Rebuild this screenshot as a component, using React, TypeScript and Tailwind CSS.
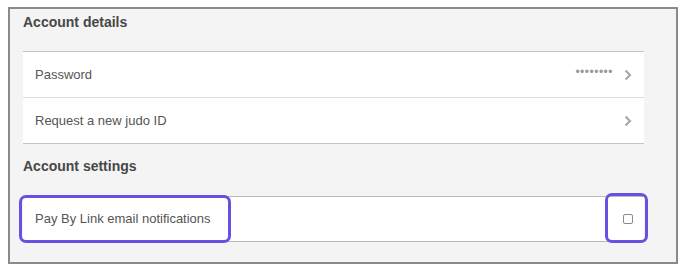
const font = { fontFamily: '"Liberation Sans", Arial, sans-serif' };

function Chevron() {
  return (
    <svg width="8" height="12" viewBox="0 0 8 12" className="shrink-0">
      <path d="M1.5 1.5 L6 6 L1.5 10.5" fill="none" stroke="#a9a9a9" strokeWidth="2.2" />
    </svg>
  );
}

export default function App() {
  return (
    <div className="w-[684px] h-[268px] bg-white pt-[7px] pl-[8px]" style={font}>
      <div className="w-[670px] h-[257px] border-2 border-[#8a8a8a] bg-[#f4f4f4] pl-[13px] pr-[32px] pt-[1px]">
        <h2 className="h-[24px] leading-[24px] text-[14px] font-bold text-[#474747]">
          Account details
        </h2>

        <div className="mt-[17px] bg-white border-t border-b border-[#c4c4c4]">
          <div className="h-[45px] flex items-center pl-[12px] pr-[12px] text-[13px] text-[#555]">
            <span className="flex-1">Password</span>
            <span className="text-[12px] text-[#999] tracking-[0.5px] -translate-y-[3px] mr-[11px]">
              ••••••••
            </span>
            <Chevron />
          </div>
          <div className="h-[46px] flex items-center pl-[12px] pr-[12px] text-[13px] text-[#555] border-t border-[#dcdcdc]">
            <span className="flex-1">Request a new judo ID</span>
            <Chevron />
          </div>
        </div>

        <h2 className="mt-[10px] h-[24px] leading-[24px] text-[14px] font-bold text-[#474747]">
          Account settings
        </h2>

        <div className="relative mt-[18px] h-[46px] bg-white border-t border-b border-[#b9b9b9] flex items-center pl-[12px] pr-[11px] text-[13px] text-[#555]">
          <span className="flex-1">Pay By Link email notifications</span>
          <span className="w-[10px] h-[10px] border border-[#8c8c8c] rounded-[2px] bg-white" />
          <div className="absolute left-[-4px] top-[-2px] w-[212px] h-[48px] border-[3px] border-[#6b4fe0] rounded-[7px]" />
          <div className="absolute right-[-4px] top-[-4px] w-[43px] h-[50px] border-[3px] border-[#6b4fe0] rounded-[7px]" />
        </div>
      </div>
    </div>
  );
}
